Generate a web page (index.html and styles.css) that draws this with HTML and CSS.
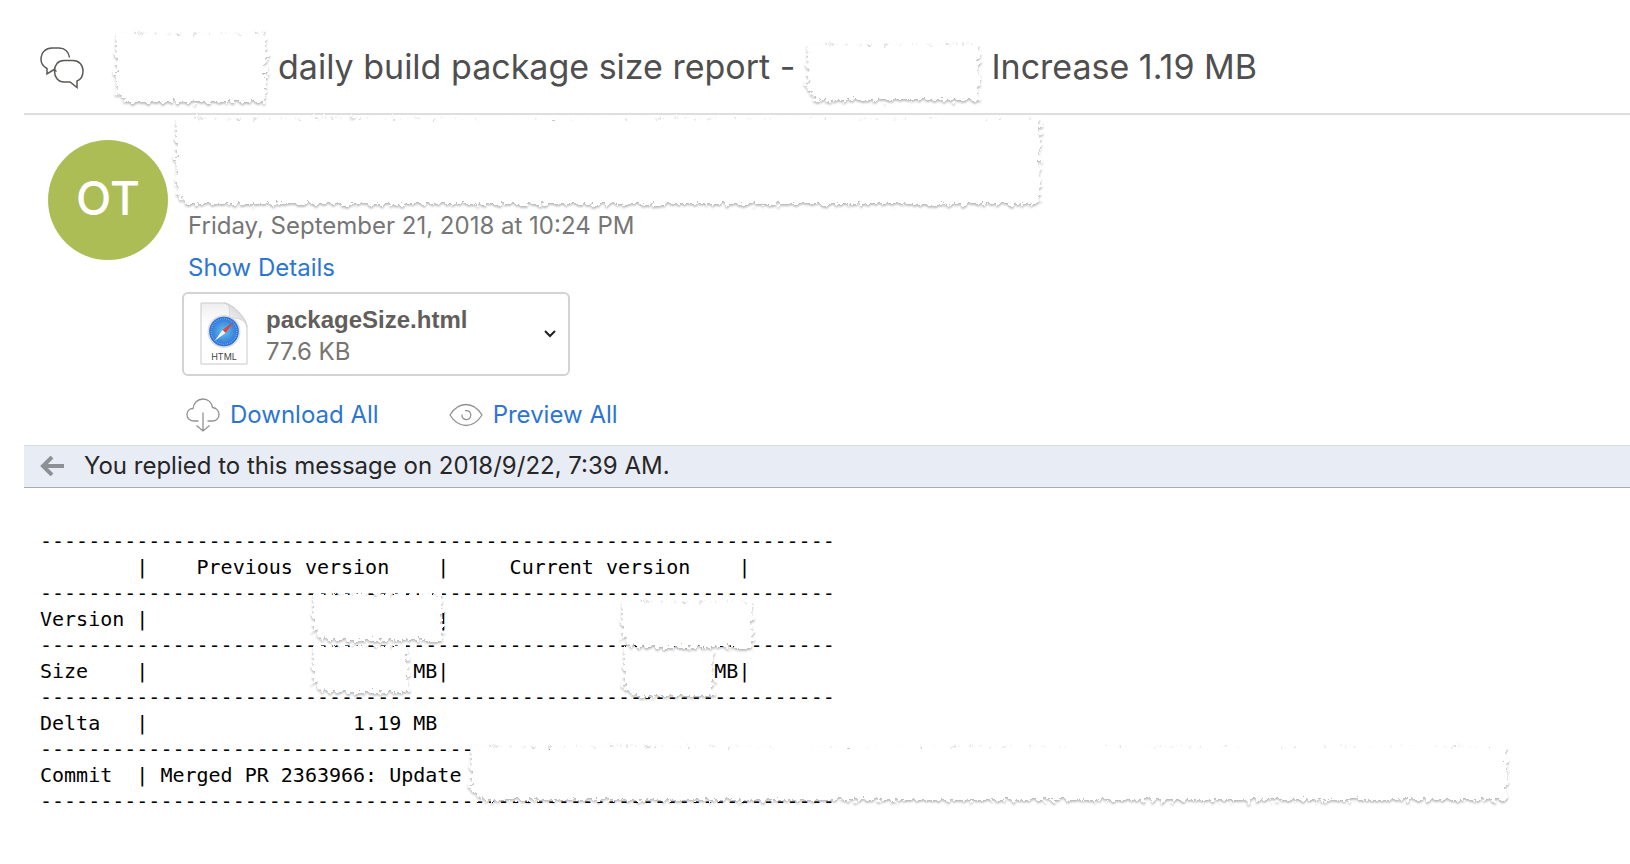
FILE: index.html
```html
<!DOCTYPE html>
<html lang="en">
<head>
<meta charset="utf-8">
<meta name="viewport" content="width=device-width, initial-scale=1">
<title>daily build package size report</title>
<link rel="stylesheet" href="styles.css">
</head>
<body>
<svg class="defs" aria-hidden="true">
  <filter id="torn" x="-10" y="-10" width="2000" height="200" filterUnits="userSpaceOnUse" primitiveUnits="userSpaceOnUse" color-interpolation-filters="sRGB">
    <feTurbulence type="fractalNoise" baseFrequency="0.2" numOctaves="3" seed="8" result="noise"/>
    <feDisplacementMap in="SourceGraphic" in2="noise" scale="12" xChannelSelector="R" yChannelSelector="G" result="paper"/>
    <feGaussianBlur in="paper" stdDeviation="1.3" result="soft"/>
    <feOffset in="soft" dy="2" result="low"/>
    <feComponentTransfer in="low" result="shade">
      <feFuncR type="linear" slope="0" intercept="0"/>
      <feFuncG type="linear" slope="0" intercept="0"/>
      <feFuncB type="linear" slope="0" intercept="0"/>
      <feFuncA type="linear" slope="0.27"/>
    </feComponentTransfer>
    <feMerge><feMergeNode in="shade"/><feMergeNode in="paper"/></feMerge>
  </filter>
</svg>
<main class="message">
  <header class="subject">
    <svg class="chat" viewBox="0 0 44 42" aria-hidden="true"><path d="M16.500 24.500L14 22.500L7 27V21.500C2.500 19 1 16 1 12.500C1 5 6 1 12 1H19C25 1 29 5 29.500 10.500"/><path d="M24 13.500H33C39 13.500 43 18 43 24C43 29 41 32.500 37 34V40.500L30 35H24C18 35 14.500 30 14.500 24C14.500 18 18 13.500 24 13.500Z"/></svg>
    <h1 class="title"><span class="torn torn-name"></span><span class="words">daily build package size report -</span><span class="torn torn-build"></span><span class="words">Increase 1.19 MB</span></h1>
  </header>
  <section class="sender">
    <div class="avatar">OT</div>
    <div class="info">
      <div class="torn torn-people"></div>
      <time class="date" datetime="2018-09-21T22:24">Friday, September 21, 2018 at 10:24 PM</time>
      <a class="details" href="#details">Show Details</a>
      <button class="attachment" type="button">
        <svg class="file" viewBox="0 0 48 64" aria-hidden="true">
          <defs>
            <linearGradient id="sheet" x1="0" y1="0" x2="0" y2="1"><stop offset="0" stop-color="#eeeeee"/><stop offset="0.35" stop-color="#ffffff"/></linearGradient>
            <linearGradient id="fold" x1="0" y1="1" x2="1" y2="0"><stop offset="0" stop-color="#ffffff"/><stop offset="1" stop-color="#c8c8c8"/></linearGradient>
            <radialGradient id="dial"><stop offset="0" stop-color="#62c3ec"/><stop offset="1" stop-color="#2c6fd8"/></radialGradient>
          </defs>
          <path d="M1 1H24C32 1 47 16 47 25V62H1Z" fill="url(#sheet)" stroke="#c9c9c9"/>
          <path d="M24 1C30 2 30 8 29.500 16C38 15.500 46 18 47 25C47 18 32 2 24 1Z" fill="url(#fold)" stroke="#cfcfcf" stroke-width="0.700"/>
          <circle cx="24" cy="29.500" r="16.500" fill="#dcdde0"/>
          <circle cx="24" cy="29.500" r="14.800" fill="url(#dial)"/>
          <circle cx="24" cy="29.500" r="12.800" fill="none" stroke="#a8d5f5" stroke-width="1.200" stroke-dasharray="0.500 1.500"/>
          <path d="M34 19.500L22.500 28L25.500 31Z" fill="#e8403a"/><path d="M14.500 39L22.500 28L25.500 31Z" fill="#f6f6f6"/>
          <text x="24" y="57.500" text-anchor="middle">HTML</text>
        </svg>
        <span class="file-text"><strong>packageSize.html</strong><span>77.6 KB</span></span>
        <svg class="chevron" viewBox="0 0 12 8" aria-hidden="true"><path d="M1 1L6 6L11 1"/></svg>
      </button>
      <div class="actions">
        <a href="#download"><svg class="icon" viewBox="0 0 34 34" aria-hidden="true"><path d="M12.500 23H8C4 23 1 20.500 1 17C1 13 3.500 10.500 7 10.500C7.500 5 11.500 1 17 1C22 1 26 4.500 26.500 9.500C30.500 10 33 13 33 16.500C33 20.500 30 23 26.500 23H21.500M17 14.500V33M10.500 27.500L17 33L23.500 27.500"/></svg>Download All</a>
        <a href="#preview"><svg class="icon" viewBox="0 0 34 34" aria-hidden="true"><path d="M1 17C5 10.500 11 6.500 17 6.500S29 10.500 33 17C29 23.500 23 27.500 17 27.500S5 23.500 1 17ZM16 12.700C20 12 22 14.500 21.800 17.500C21.500 20.500 19 22 16.500 21.500C14 21 12.800 19 13 16.500"/></svg>Preview All</a>
      </div>
    </div>
  </section>
  <p class="replied"><svg class="arrow" viewBox="0 0 24 20" aria-hidden="true"><path d="M12 1L3 10L12 19M2 10H24"/></svg>You replied to this message on 2018/9/22, 7:39 AM.</p>
  <div class="report">
<pre>------------------------------------------------------------------
        |    Previous version    |     Current version    |
------------------------------------------------------------------
Version |                        |
------------------------------------------------------------------
Size    |                      MB|                      MB|
------------------------------------------------------------------
Delta   |                 1.19 MB
------------------------------------------------------------------
Commit  | Merged PR 2363966: Update
------------------------------------------------------------------</pre>
    <span class="torn torn-size-now"></span>
    <span class="torn torn-version-now"></span>
    <span class="torn torn-size-old"></span>
    <span class="torn torn-version-old"></span>
    <span class="torn torn-commit"></span>
  </div>
</main>
</body>
</html>
```
FILE: styles.css
```css
* { box-sizing: border-box; }
body {
  margin: 0;
  background: #fff;
  color: #262626;
  font: 24px/32px Inter, "Liberation Sans", sans-serif;
}
.defs { position: absolute; width: 0; height: 0; }
svg { flex: none; }
.message { padding-left: 24px; }

.subject {
  display: flex;
  align-items: center;
  gap: 32px;
  padding: 33px 16px 11px;
  border-bottom: 2px solid #dededd;
}
.chat { width: 44px; height: 42px; fill: none; stroke: #5c5a55; stroke-width: 1.5; }
.title {
  display: flex;
  align-items: center;
  gap: 12px;
  margin: 0;
  color: #4f4f4f;
  font-size: 34px;
  font-weight: 400;
  line-height: 44px;
  white-space: nowrap;
}
.words { padding-bottom: 2px; }

.torn { display: block; filter: url(#torn); }
.torn::before {
  content: "";
  display: block;
  height: 100%;
  background: #fff;
  clip-path: polygon(0 0, 100% 0, 100% 100%, 10px 100%, 0 calc(100% - 10px));
}
.torn-name { width: 150px; height: 69px; }
.torn-build { width: 172px; height: 56px; margin-top: 9px; }
.torn-people { width: 864px; max-width: 100%; height: 86px; margin-left: -12px; }

.sender { display: flex; gap: 20px; padding: 3px 24px 12px; }
.avatar {
  flex: none;
  width: 120px;
  height: 120px;
  margin-top: 22px;
  border-radius: 50%;
  background: #adbd56;
  color: #fff;
  font-size: 46px;
  font-weight: 500;
  line-height: 116px;
  text-align: center;
}
.info { display: flex; flex-direction: column; align-items: flex-start; flex: 1; }
.date { margin-top: 6px; color: #767676; }
.details { margin-top: 10px; }
a { color: #2b76d3; text-decoration: none; }

.attachment {
  display: flex;
  align-items: center;
  gap: 18px;
  width: 388px;
  height: 84px;
  margin: 8px 0 0 -6px;
  padding: 0 12px 0 16px;
  border: 2px solid #d3d3d3;
  border-radius: 6px;
  background: #fff;
  color: #777572;
  font: inherit;
  text-align: left;
}
.file { width: 48px; height: 64px; }
.file text { fill: #444; font: 9px Inter, sans-serif; }
.file-text { display: flex; flex-direction: column; flex: 1; padding-top: 4px; }
.file-text strong { color: #615e5b; font: bold 24px/32px "Liberation Sans", sans-serif; }
.chevron { width: 12px; height: 8px; fill: none; stroke: #222; stroke-width: 2; }

.actions { display: flex; gap: 72px; margin-top: 21px; }
.actions a { display: flex; align-items: center; gap: 10px; height: 36px; }
.icon { width: 34px; height: 34px; margin-left: -2px; fill: none; stroke: #929292; stroke-width: 1.3; }

.replied {
  display: flex;
  align-items: center;
  gap: 20px;
  min-height: 43px;
  margin: 0;
  padding: 0 16px 1px;
  border-top: 1px solid #d8dadd;
  border-bottom: 1px solid #a9adb8;
  background: #e8ecf5;
}
.arrow { width: 24px; height: 20px; fill: none; stroke: #8d9095; stroke-width: 4; }

.report { position: relative; padding: 40px 16px; }
.report pre {
  margin: 0;
  color: #000;
  font: 20px/26px "DejaVu Sans Mono", monospace;
}
.report .torn { position: absolute; }
.torn-version-old { left: 289px; top: 106px; width: 129px; height: 46px; }
.torn-size-old { left: 289px; top: 158px; width: 95px; height: 46px; }
.torn-version-now { left: 598px; top: 113px; width: 130px; height: 46px; }
.torn-size-now { left: 600px; top: 158px; width: 89px; height: 50px; }
.torn-commit { left: 447px; top: 258px; width: 1036px; height: 54px; }
```
